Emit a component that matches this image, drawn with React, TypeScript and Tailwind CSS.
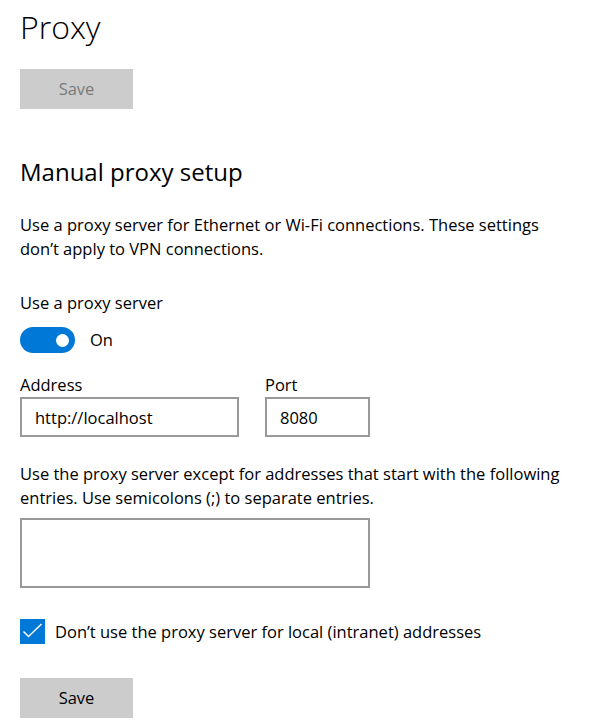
import { useState } from 'react';

const font = { fontFamily: '"Open Sans", "Noto Sans", Arial, sans-serif' };

export default function App() {
  const [on, setOn] = useState(true);
  const [local, setLocal] = useState(true);
  const [address, setAddress] = useState('http://localhost');
  const [port, setPort] = useState('8080');
  const [exceptions, setExceptions] = useState('');

  return (
    <div className="min-h-[727px] w-[591px] bg-white pl-5 text-black" style={font}>
      <h1 className="pt-[5px] text-[32px] font-light leading-[44px]">Proxy</h1>

      <button
        disabled
        className="mt-[20px] h-10 w-[113px] bg-[#cccccc] text-[16.5px] text-[#7a7a7a]"
      >
        Save
      </button>

      <h2 className="mt-[47px] text-[24px] leading-[32px] font-normal">Manual proxy setup</h2>

      <p className="mt-[25px] w-[545px] text-[16.5px] leading-[24px]">
        Use a proxy server for Ethernet or Wi-Fi connections. These settings don’t apply to VPN connections.
      </p>

      <div className="mt-[30px] text-[16.5px] leading-[24px]">Use a proxy server</div>

      <div className="mt-[12px] flex items-center gap-[15px]">
        <button
          role="switch"
          aria-checked={on}
          onClick={() => setOn(!on)}
          className={
            on
              ? 'flex h-[26px] w-[55px] items-center justify-end rounded-full bg-[#0078d7] px-[6px]'
              : 'flex h-[26px] w-[55px] items-center justify-start rounded-full border-2 border-[#333] bg-white px-[4px]'
          }
        >
          <span className={on ? 'h-[13px] w-[13px] rounded-full bg-white' : 'h-[13px] w-[13px] rounded-full bg-[#333]'} />
        </button>
        <span className="text-[16.5px] leading-[24px]">{on ? 'On' : 'Off'}</span>
      </div>

      <div className="mt-[20px] flex gap-[26px] text-[16.5px]">
        <label className="flex flex-col">
          <span className="leading-[24px]">Address</span>
          <input
            value={address}
            onChange={(e) => setAddress(e.target.value)}
            className="h-10 w-[219px] border-2 border-[#999999] px-[13px] outline-none"
          />
        </label>
        <label className="flex flex-col">
          <span className="leading-[24px]">Port</span>
          <input
            value={port}
            onChange={(e) => setPort(e.target.value)}
            className="h-10 w-[105px] border-2 border-[#999999] px-[13px] outline-none"
          />
        </label>
      </div>

      <p className="mt-[25px] w-[560px] text-[16.5px] leading-[24px]">
        Use the proxy server except for addresses that start with the following entries. Use semicolons (;) to separate entries.
      </p>

      <textarea
        value={exceptions}
        onChange={(e) => setExceptions(e.target.value)}
        className="mt-[8px] block h-[70px] w-[350px] resize-none border-2 border-[#999999] px-[13px] py-[6px] text-[16.5px] outline-none"
      />

      <label className="mt-[31px] flex items-center gap-[10px] text-[16.5px]">
        <button
          role="checkbox"
          aria-checked={local}
          onClick={() => setLocal(!local)}
          className={
            local
              ? 'flex h-[25px] w-[25px] items-center justify-center bg-[#0078d7]'
              : 'flex h-[25px] w-[25px] items-center justify-center border-2 border-[#333] bg-white'
          }
        >
          {local && (
            <svg width="25" height="25" viewBox="0 0 25 25" fill="none">
              <path d="M3.5 12.5 L8.5 17.5 L21.5 5" stroke="white" strokeWidth="1.5" />
            </svg>
          )}
        </button>
        <span className="leading-[24px]">Don’t use the proxy server for local (intranet) addresses</span>
      </label>

      <button className="mt-[34px] h-10 w-[113px] bg-[#cccccc] text-[16.5px] text-black">Save</button>
    </div>
  );
}
